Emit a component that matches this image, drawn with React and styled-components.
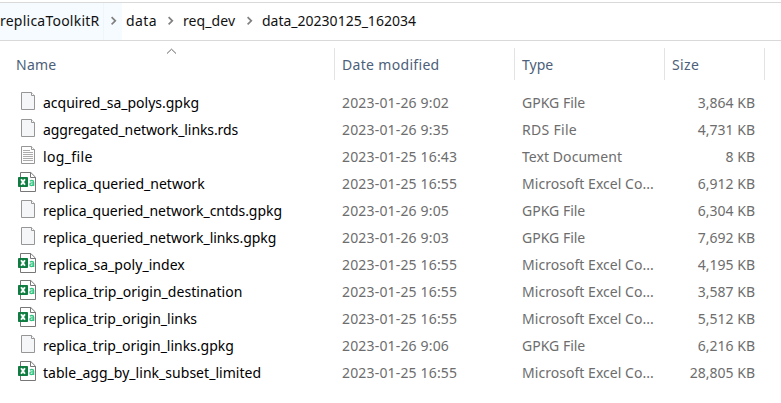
import React from 'react';
import styled, { createGlobalStyle } from 'styled-components';

const GlobalStyle = createGlobalStyle`
  * { box-sizing: border-box; }
  body {
    margin: 0;
    background: #fff;
    font: 14px/20px "Noto Sans", "Open Sans", sans-serif;
    overflow: hidden;
  }
`;

const Explorer = styled.main`
  width: 781px;
  height: 403px;
  padding-top: 2px;
  background: #fff;
`;

const AddressBar = styled.nav`
  display: flex;
  height: 39px;
  border-top: 1px solid #d9d9d9;
  border-bottom: 1px solid #d9d9d9;
  color: #111;
`;

const Crumb = styled.div`
  display: flex;
  width: ${(p) => p.$width}px;
  background: ${(p) => (p.$hovered ? '#f5fbff' : 'transparent')};
`;

const CrumbLabel = styled.span`
  flex: 1;
  padding: 8px 0 0 ${(p) => p.$inset}px;
  white-space: nowrap;
  letter-spacing: ${(p) => p.$spacing || 0}px;
`;

const CrumbArrow = styled.span`
  display: flex;
  width: 19px;
  padding: 13px 0 0 6px;
  border-left: 1px solid ${(p) => (p.$hovered ? '#ecf7fd' : 'transparent')};
`;

const Columns = styled.div`
  display: grid;
  grid-template-columns: 335px 180px 150px 100px;
`;

const Header = styled(Columns)`
  height: 48px;
  padding-top: 7px;
  color: #4c607a;
`;

const HeaderCell = styled.div`
  position: relative;
  height: 32px;
  padding: 7px 0 0 ${(p) => p.$inset || 7}px;
  border-right: 1px solid #e3e3e3;
  letter-spacing: ${(p) => p.$spacing || 0}px;
`;

const SortMark = styled.svg`
  position: absolute;
  top: 0;
  left: 166px;
`;

const Row = styled(Columns)`
  height: 27px;
  color: #6d6d6d;
`;

const NameCell = styled.div`
  display: flex;
  padding-left: 18px;
  color: #000;
`;

const IconSlot = styled.span`
  display: flex;
  width: 25px;
  padding-top: 3px;
`;

const Text = styled.span`
  padding-top: 4px;
  white-space: nowrap;
  letter-spacing: ${(p) => p.$spacing || 0}px;
`;

const Cell = styled.div`
  padding: 4px 0 0 7px;
  white-space: nowrap;
  letter-spacing: ${(p) => p.$spacing || 0}px;
`;

const SizeCell = styled(Cell)`
  padding-right: 10px;
  text-align: right;
`;

const ChevronRight = () => (
  <svg width="8" height="10" viewBox="0 0 8 10">
    <path d="M1.6 1.2 5.3 4.8 1.6 8.4" fill="none" stroke="#808080" strokeWidth="1.7" />
  </svg>
);

const PageIcon = ({ lined }) => (
  <svg width="18" height="19" viewBox="0 0 18 19">
    <path d="M3.5.5H13.5L16.5 3.5V17.5H3.5Z" fill={lined ? '#fdfdfd' : '#f5f6f7'} stroke="#969696" />
    <path d="M13.5.5V3.5H16.5" fill="#fff" stroke="#969696" />
    {lined && <path d="M5 4.5H12M5 6.5H15M5 8.5H15M5 10.5H15M5 12.5H15M5 14.5H15" stroke="#a2a2a2" strokeWidth=".9" />}
  </svg>
);

const CsvIcon = () => (
  <svg width="18" height="20" viewBox="0 0 18 20" overflow="visible">
    <path d="M2.5-.5H12.8L17.5 4.2V18.5H2.5Z" fill="#fff" stroke="#777" />
    <path d="M12.5-.5V4.5H17.5" fill="none" stroke="#777" />
    <rect x="0" y="4" width="10" height="10" rx=".8" fill="#107c41" />
    <path d="M3.1 6.2 6.9 11.8M6.9 6.2 3.1 11.8" stroke="#fff" strokeWidth="1.9" />
    <path d="M11.9 8.2Q12.7 7.5 13.8 7.5Q15.6 7.5 15.6 9.2V13M15.5 9.9H13.7Q11.9 10 11.9 11.3Q11.9 12.5 13.2 12.5Q15.3 12.5 15.5 10.6" fill="none" stroke="#33c481" strokeWidth="1.4" />
  </svg>
);

const crumbs = [
  { label: 'replicaToolkitR', width: 122, inset: 0, spacing: 0.23, hovered: true },
  { label: 'data', width: 57, inset: 4, spacing: 0.4 },
  { label: 'req_dev', width: 79, inset: 4, spacing: 0.1 },
];

const GPKG = { label: 'GPKG File' };
const RDS = { label: 'RDS File', spacing: 0.3 };
const TXT = { label: 'Text Document', spacing: 0.06, lined: true };
const CSV = { label: 'Microsoft Excel Co...', spacing: 0.04, csv: true };

const files = [
  { name: 'acquired_sa_polys.gpkg', date: '2023-01-26 9:02', type: GPKG, size: '3,864 KB' },
  { name: 'aggregated_network_links.rds', spacing: -0.1, date: '2023-01-26 9:35', type: RDS, size: '4,731 KB' },
  { name: 'log_file', spacing: 0.36, date: '2023-01-25 16:43', type: TXT, size: '8 KB' },
  { name: 'replica_queried_network', date: '2023-01-25 16:55', type: CSV, size: '6,912 KB' },
  { name: 'replica_queried_network_cntds.gpkg', spacing: -0.05, date: '2023-01-26 9:05', type: GPKG, size: '6,304 KB' },
  { name: 'replica_queried_network_links.gpkg', spacing: -0.05, date: '2023-01-26 9:03', type: GPKG, size: '7,692 KB' },
  { name: 'replica_sa_poly_index', spacing: 0.05, date: '2023-01-25 16:55', type: CSV, size: '4,195 KB' },
  { name: 'replica_trip_origin_destination', spacing: 0.03, date: '2023-01-25 16:55', type: CSV, size: '3,587 KB' },
  { name: 'replica_trip_origin_links', spacing: -0.01, date: '2023-01-25 16:55', type: CSV, size: '5,512 KB' },
  { name: 'replica_trip_origin_links.gpkg', spacing: -0.02, date: '2023-01-26 9:06', type: GPKG, size: '6,216 KB' },
  { name: 'table_agg_by_link_subset_limited', spacing: 0.03, date: '2023-01-25 16:55', type: CSV, size: '28,805 KB' },
];

export default function App() {
  return (
    <Explorer>
      <GlobalStyle />
      <AddressBar>
        {crumbs.map((c) => (
          <Crumb key={c.label} $width={c.width} $hovered={c.hovered}>
            <CrumbLabel $inset={c.inset} $spacing={c.spacing}>{c.label}</CrumbLabel>
            <CrumbArrow $hovered={c.hovered}><ChevronRight /></CrumbArrow>
          </Crumb>
        ))}
        <CrumbLabel $inset={4}>data_20230125_162034</CrumbLabel>
      </AddressBar>
      <Header>
        <HeaderCell $inset={16} $spacing={0.25}>
          Name
          <SortMark width="11" height="7" viewBox="0 0 11 7">
            <path d="M1 5.5 5.5 1.2 10 5.5" fill="none" stroke="#666" />
          </SortMark>
        </HeaderCell>
        <HeaderCell $spacing={0.32}>Date modified</HeaderCell>
        <HeaderCell>Type</HeaderCell>
        <HeaderCell $spacing={0.35}>Size</HeaderCell>
      </Header>
      {files.map((f) => (
        <Row key={f.name}>
          <NameCell>
            <IconSlot>{f.type.csv ? <CsvIcon /> : <PageIcon lined={f.type.lined} />}</IconSlot>
            <Text $spacing={f.spacing}>{f.name}</Text>
          </NameCell>
          <Cell $spacing={0.17}>{f.date}</Cell>
          <Cell $spacing={f.type.spacing}>{f.type.label}</Cell>
          <SizeCell>{f.size}</SizeCell>
        </Row>
      ))}
    </Explorer>
  );
}
